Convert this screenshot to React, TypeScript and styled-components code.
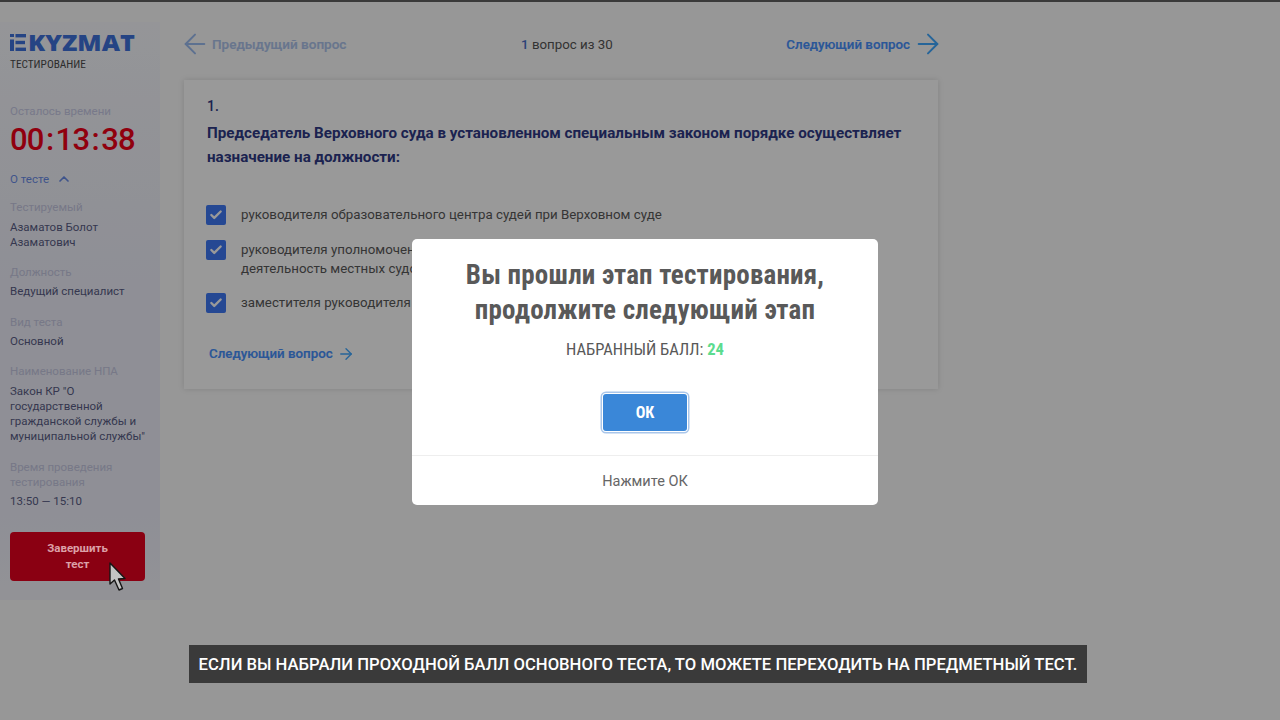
import React from "react";
import styled, { createGlobalStyle } from "styled-components";
import { ArrowLeft, ArrowRight, ChevronUp, Check } from "lucide-react";

const Global = createGlobalStyle`
  html, body { margin: 0; padding: 0; height: 720px; overflow: hidden; background: #fff; }
  body { font-family: Roboto, "Noto Sans", sans-serif; }
  * { box-sizing: border-box; }
`;

const Page = styled.div`
  position: relative;
  width: 1280px;
  height: 720px;
  overflow: hidden;
  background: #fcfcfc;
  border-top: 2px solid #3a3a3a;
  display: flex;
  align-items: flex-start;
  padding-top: 20px;
`;

const Sidebar = styled.aside`
  width: 160px;
  height: 578px;
  flex: none;
  padding: 11px 10px 0;
  background: linear-gradient(180deg, #f8f9fd 0%, #eeeffa 45%, #eeeffa 85%, #f4f4fa 100%);
  display: flex;
  flex-direction: column;
`;

const Logo = styled.div`
  display: flex;
  align-items: center;
  height: 18px;
  gap: 2px;
  color: #3f72dc;
`;

const LogoWord = styled.span`
  font-family: "Open Sans", sans-serif;
  font-weight: 800;
  font-size: 23.5px;
  line-height: 18px;
  transform: scaleX(1.07);
  transform-origin: left center;
`;

const LogoSub = styled.div`
  font-size: 11.3px;
  font-stretch: 75%;
  line-height: 14px;
  color: #4c4c4c;
  margin-top: 7px;
`;

const TimeLabel = styled.div`
  font-size: 11.5px;
  line-height: 15px;
  color: #c8cae6;
  margin-top: 32px;
`;

const Timer = styled.div`
  font-size: 31px;
  line-height: 36px;
  font-weight: 500;
  color: #f00018;
  margin-top: 3px;
  letter-spacing: -0.8px;
  white-space: nowrap;
`;

const Colon = styled.span`
  padding: 0 2.3px;
`;

const AboutRow = styled.div`
  display: flex;
  align-items: center;
  gap: 7px;
  font-size: 11.5px;
  line-height: 15px;
  color: #6a8de8;
  margin-top: 13px;
`;

const InfoBlock = styled.div<{ $top: number }>`
  margin-top: ${(p) => p.$top}px;
`;

const InfoLabel = styled.div`
  font-size: 11.5px;
  line-height: 15px;
  color: #c6c8e2;
  margin-bottom: 4.5px;
`;

const InfoValue = styled.div`
  font-size: 11.5px;
  line-height: 15px;
  color: #5a5d85;
`;

const FinishButton = styled.button`
  position: relative;
  z-index: 1;
  margin-top: 22.5px;
  width: 135px;
  height: 49px;
  border: 0;
  border-radius: 4px;
  background: #8a0012;
  color: #dca0a8;
  font-family: Roboto, sans-serif;
  font-weight: 700;
  font-size: 11.5px;
  line-height: 16px;
  padding: 0 30px;
  text-align: center;
`;

const Main = styled.main`
  width: 754px;
  margin-left: 24px;
  display: flex;
  flex-direction: column;
`;

const NavRow = styled.div`
  height: 44px;
  display: flex;
  align-items: center;
  justify-content: space-between;
`;

const NavLink = styled.div<{ $faded?: boolean }>`
  display: flex;
  align-items: center;
  gap: 8px;
  font-size: 13.3px;
  font-weight: 500;
  color: ${(p) => (p.$faded ? "#adc4ec" : "#4690fc")};
  -webkit-text-stroke: 0.2px currentColor;
  svg {
    color: ${(p) => (p.$faded ? "#9cbcf0" : "#40a8ff")};
    flex: none;
    margin: 0 -6px;
  }
`;

const PrevLink = styled(NavLink)`
  gap: 7px;
  font-size: 13.5px;
  svg { margin: 0 -6px 0 -5px; }
`;

const Counter = styled.div`
  font-size: 13.3px;
  color: #555;
  margin-left: 1px;
  b { color: #4a6fc8; font-weight: 500; }
`;

const Card = styled.section`
  margin-top: 14px;
  height: 309px;
  background: #fff;
  box-shadow: 0 0 6px rgba(0, 0, 0, 0.14);
  padding: 18px 23px 0;
`;

const QuestionNumber = styled.div`
  font-size: 14px;
  line-height: 16px;
  font-weight: 500;
  color: #2f3a85;
`;

const Question = styled.h2`
  margin: 7px 0 0;
  font-size: 15.2px;
  line-height: 24px;
  font-weight: 700;
  color: #2f3a85;
`;

const Options = styled.div`
  margin-top: 36px;
  display: flex;
  flex-direction: column;
  gap: 14.5px;
`;

const Option = styled.label`
  display: flex;
  align-items: flex-start;
  gap: 15px;
  margin-left: -1px;
  font-size: 13.3px;
  line-height: 19.5px;
  color: #595959;
`;

const Box = styled.span`
  width: 20px;
  height: 20px;
  flex: none;
  border-radius: 2px;
  background: #3e78f6;
  color: #fff;
  display: flex;
  align-items: center;
  justify-content: center;
`;

const BottomLink = styled(NavLink)`
  margin-top: 32px;
  margin-left: 2px;
  gap: 4px;
  line-height: 16px;
  svg { margin: 0; }
`;

const Overlay = styled.div`
  position: absolute;
  inset: 0;
  background: rgba(0, 0, 0, 0.4);
`;

const Cursor = styled.svg`
  position: absolute;
  z-index: 2;
  left: 108px;
  top: 559px;
`;

const Modal = styled.div`
  position: absolute;
  left: 412px;
  top: 237px;
  width: 466px;
  height: 266px;
  background: #fff;
  border-radius: 5px;
  display: flex;
  flex-direction: column;
  align-items: center;
  text-align: center;
  padding-top: 19px;
`;

const ModalTitle = styled.h1`
  margin: 0;
  font-size: 27px;
  line-height: 35px;
  font-weight: 700;
  font-stretch: 75%;
  color: #595959;
  letter-spacing: 0.2px;
`;

const Score = styled.div`
  margin-top: 12px;
  font-size: 16.6px;
  line-height: 20px;
  font-stretch: 75%;
  color: #595959;
  b { color: #5bdc8e; font-weight: 700; }
`;

const OkButton = styled.button`
  margin-top: 34px;
  width: 84px;
  height: 37px;
  border: 0;
  border-radius: 3px;
  background: #3a87d8;
  color: #fff;
  font-family: Roboto, sans-serif;
  font-weight: 700;
  font-stretch: 85%;
  font-size: 16px;
  box-shadow: 0 0 0 1px #fff, 0 0 0 2.5px #a9c6ea;
`;

const ModalFooter = styled.div`
  margin-top: 24px;
  width: 100%;
  flex: 1;
  border-top: 1px solid #eee;
  padding-top: 2px;
  display: flex;
  align-items: center;
  justify-content: center;
  font-size: 14.5px;
  color: #666;
`;

const Caption = styled.div`
  position: absolute;
  left: 189px;
  top: 643px;
  width: 898px;
  height: 38px;
  background: #3a3a3a;
  color: #fff;
  display: flex;
  align-items: center;
  justify-content: center;
  font-size: 16.65px;
  font-weight: 500;
  white-space: nowrap;
`;

export default function App() {
  return (
    <>
      <Global />
      <Page>
        <Sidebar>
          <Logo>
            <svg width="16" height="17" viewBox="0 0 16 17" fill="currentColor" aria-hidden="true">
              <rect x="0" y="0" width="4" height="3" />
              <rect x="0" y="5.5" width="4" height="11.5" />
              <rect x="5.5" y="0" width="10.5" height="3.4" />
              <rect x="5.5" y="6.8" width="9.5" height="3.4" />
              <rect x="5.5" y="13.6" width="10.5" height="3.4" />
            </svg>
            <LogoWord>KYZMAT</LogoWord>
          </Logo>
          <LogoSub>ТЕСТИРОВАНИЕ</LogoSub>
          <TimeLabel>Осталось времени</TimeLabel>
          <Timer>
            00<Colon>:</Colon>13<Colon>:</Colon>38
          </Timer>
          <AboutRow>
            О тесте <ChevronUp size={16} strokeWidth={2.6} />
          </AboutRow>
          <InfoBlock $top={13}>
            <InfoLabel>Тестируемый</InfoLabel>
            <InfoValue>
              Азаматов Болот
              <br />
              Азаматович
            </InfoValue>
          </InfoBlock>
          <InfoBlock $top={15}>
            <InfoLabel>Должность</InfoLabel>
            <InfoValue>Ведущий специалист</InfoValue>
          </InfoBlock>
          <InfoBlock $top={15.5}>
            <InfoLabel>Вид теста</InfoLabel>
            <InfoValue>Основной</InfoValue>
          </InfoBlock>
          <InfoBlock $top={15}>
            <InfoLabel>Наименование НПА</InfoLabel>
            <InfoValue>
              Закон КР "О
              <br />
              государственной
              <br />
              гражданской службы и
              <br />
              муниципальной службы"
            </InfoValue>
          </InfoBlock>
          <InfoBlock $top={16}>
            <InfoLabel>
              Время проведения
              <br />
              тестирования
            </InfoLabel>
            <InfoValue>13:50 — 15:10</InfoValue>
          </InfoBlock>
          <FinishButton>Завершить тест</FinishButton>
        </Sidebar>
        <Main>
          <NavRow>
            <PrevLink $faded>
              <ArrowLeft size={32} strokeWidth={1.5} />
              Предыдущий вопрос
            </PrevLink>
            <Counter>
              <b>1</b> вопрос из 30
            </Counter>
            <NavLink>
              Следующий вопрос
              <ArrowRight size={32} strokeWidth={1.5} />
            </NavLink>
          </NavRow>
          <Card>
            <QuestionNumber>1.</QuestionNumber>
            <Question>
              Председатель Верховного суда в установленном специальным законом порядке осуществляет назначение на
              должности:
            </Question>
            <Options>
              <Option>
                <Box>
                  <Check size={14} strokeWidth={4} />
                </Box>
                <span>руководителя образовательного центра судей при Верховном суде</span>
              </Option>
              <Option>
                <Box>
                  <Check size={14} strokeWidth={4} />
                </Box>
                <span>
                  руководителя уполномоченного органа
                  <br />
                  деятельность местных судов
                </span>
              </Option>
              <Option>
                <Box>
                  <Check size={14} strokeWidth={4} />
                </Box>
                <span>заместителя руководителя</span>
              </Option>
            </Options>
            <BottomLink>
              Следующий вопрос
              <ArrowRight size={18} strokeWidth={1.8} />
            </BottomLink>
          </Card>
        </Main>
        <Overlay />
        <Cursor width="20" height="32" viewBox="0 0 20 32" aria-hidden="true">
          <path d="M2 2 L2 23 L6.5 19 L11 29 L14.5 27.5 L10.5 18 L17 17.5 Z" fill="#c4c4c4" stroke="#151515" strokeWidth="1.4" strokeLinejoin="round" />
        </Cursor>
        <Modal>
          <ModalTitle>
            Вы прошли этап тестирования,
            <br />
            продолжите следующий этап
          </ModalTitle>
          <Score>
            НАБРАННЫЙ БАЛЛ: <b>24</b>
          </Score>
          <OkButton>ОК</OkButton>
          <ModalFooter>Нажмите ОК</ModalFooter>
        </Modal>
        <Caption>ЕСЛИ ВЫ НАБРАЛИ ПРОХОДНОЙ БАЛЛ ОСНОВНОГО ТЕСТА, ТО МОЖЕТЕ ПЕРЕХОДИТЬ НА ПРЕДМЕТНЫЙ ТЕСТ.</Caption>
      </Page>
    </>
  );
}
